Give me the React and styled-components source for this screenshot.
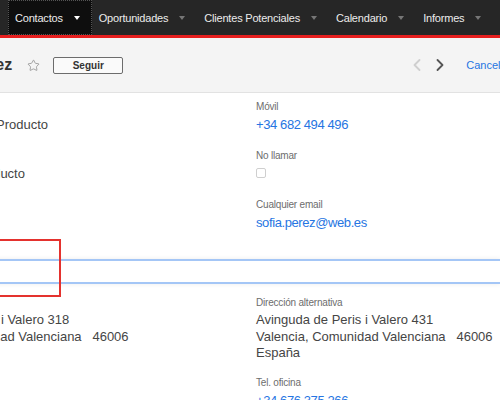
import styled, { createGlobalStyle } from "styled-components";
import { Star, ChevronLeft, ChevronRight } from "lucide-react";

const GlobalStyle = createGlobalStyle`
  html, body {
    margin: 0;
    padding: 0;
    background: #fff;
  }
  body {
    font-family: "Liberation Sans", Arial, sans-serif;
  }
`;

const Viewport = styled.div`
  position: relative;
  width: 500px;
  height: 400px;
  overflow: hidden;
  background: #fff;
`;

const Nav = styled.nav`
  display: flex;
  height: 35px;
  padding-left: 8px;
  background: #262626;
  border-bottom: 3px solid #e61e1e;
  white-space: nowrap;
`;

const Tab = styled.div`
  display: flex;
  align-items: center;
  padding: 0 12px 0 7px;
  color: #ececec;
  font-size: 11px;
  letter-spacing: -0.2px;
  background: ${(p) => (p.active ? "#0e0e0e" : "transparent")};
  outline: ${(p) => (p.active ? "1px dotted #555" : "none")};
  outline-offset: -1px;
`;

const Caret = styled.span`
  width: 0;
  height: 0;
  margin-left: 11px;
  margin-top: 1px;
  border-left: 3.5px solid transparent;
  border-right: 3.5px solid transparent;
  border-top: 4px solid ${(p) => (p.active ? "#fff" : "#767676")};
`;

const Header = styled.header`
  display: flex;
  align-items: center;
  height: 54px;
  background: #f4f4f4;
  border-bottom: 1px solid #e2e2e2;
  white-space: nowrap;

  & > * {
    flex-shrink: 0;
  }
`;

const Title = styled.h1`
  margin: 0 0 0 -74px;
  font-size: 16px;
  font-weight: bold;
  color: #333;
`;

const StarButton = styled.span`
  display: flex;
  margin-left: 15px;
  color: #8a8a8a;
`;

const FollowButton = styled.button`
  box-sizing: border-box;
  width: 70px;
  height: 17px;
  margin-left: 13px;
  padding: 0;
  border: 1px solid #6c6c6c;
  border-radius: 2px;
  background: #fafafa;
  font-family: inherit;
  font-size: 10px;
  font-weight: bold;
  color: #333;
`;

const Pager = styled.div`
  display: flex;
  gap: 3px;
  margin-left: 284px;
`;

const ArrowButton = styled.span`
  display: flex;
  color: ${(p) => (p.disabled ? "#cfcfcf" : "#555")};
`;

const CancelLink = styled.a`
  margin-left: 16px;
  color: #2675e2;
  font-size: 11px;
`;

const Body = styled.main`
  margin-left: -108px;
`;

const FieldGrid = styled.div`
  display: grid;
  grid-template-columns: 364px 1fr;
  grid-auto-rows: 49px;
  padding-top: 7px;
`;

const Field = styled.div`
  display: flex;
  flex-direction: column;
  margin-bottom: ${(p) => p.gap || 0}px;
`;

const Label = styled.span`
  font-size: 10px;
  line-height: 14px;
  letter-spacing: -0.2px;
  color: #6d6d6d;
`;

const Value = styled.span`
  margin-top: 2px;
  font-size: 13px;
  line-height: ${(p) => (p.multi ? "16.5px" : "18px")};
  color: #454545;
  white-space: pre;
`;

const LinkValue = styled.a`
  margin-top: 2px;
  font-size: 13px;
  line-height: 18px;
  letter-spacing: -0.4px;
  color: #2675e2;
  white-space: nowrap;
`;

const Checkbox = styled.span`
  box-sizing: border-box;
  width: 10px;
  height: 10px;
  margin-top: 5px;
  border: 1px solid #cfcfcf;
  border-radius: 2px;
`;

const Band = styled.div`
  box-sizing: border-box;
  height: 25px;
  margin-top: 12px;
  background: #fff;
  border-top: 2px solid #a4c6f6;
  border-bottom: 2px solid #a4c6f6;
  box-shadow: 0 0 5px rgba(0, 0, 0, 0.08);
`;

const AddressGrid = styled.div`
  display: grid;
  grid-template-columns: 364px 1fr;
  padding-top: 12px;
`;

const Column = styled.div`
  display: flex;
  flex-direction: column;
`;

const Highlight = styled.div`
  position: absolute;
  left: -10px;
  top: 239px;
  width: 71px;
  height: 58px;
  box-sizing: border-box;
  border: 2px solid #e4322e;
`;

const tabs = [
  "Contactos",
  "Oportunidades",
  "Clientes Potenciales",
  "Calendario",
  "Informes",
];

export default function App() {
  return (
    <Viewport>
      <GlobalStyle />
      <Nav>
        {tabs.map((t, i) => (
          <Tab key={t} active={i === 0}>
            {t}
            <Caret active={i === 0} />
          </Tab>
        ))}
      </Nav>
      <Header>
        <Title>Sofía Pérez</Title>
        <StarButton>
          <Star size={13} strokeWidth={1.4} />
        </StarButton>
        <FollowButton>Seguir</FollowButton>
        <Pager>
          <ArrowButton disabled>
            <ChevronLeft size={20} strokeWidth={2.2} />
          </ArrowButton>
          <ArrowButton>
            <ChevronRight size={20} strokeWidth={2.2} />
          </ArrowButton>
        </Pager>
        <CancelLink>Cancelar</CancelLink>
      </Header>
      <Body>
        <FieldGrid>
          <Field>
            <Label>Cargo</Label>
            <Value>Responsable del  Producto</Value>
          </Field>
          <Field>
            <Label>Móvil</Label>
            <LinkValue>+34 682 494 496</LinkValue>
          </Field>
          <Field>
            <Label>Departamento</Label>
            <Value>Desarrollo de Producto</Value>
          </Field>
          <Field>
            <Label>No llamar</Label>
            <Checkbox />
          </Field>
          <Field>
            <Label>Asistente</Label>
          </Field>
          <Field>
            <Label>Cualquier email</Label>
            <LinkValue>sofia.perez@web.es</LinkValue>
          </Field>
        </FieldGrid>
        <Band />
        <AddressGrid>
          <Column>
            <Field>
              <Label>Dirección</Label>
              <Value multi>
                {"Avinguda de Peris i Valero 318\nValencia, Comunidad Valenciana   46006"}
              </Value>
            </Field>
          </Column>
          <Column>
            <Field gap={14.5}>
              <Label>Dirección alternativa</Label>
              <Value multi>
                {"Avinguda de Peris i Valero 431\nValencia, Comunidad Valenciana   46006\nEspaña"}
              </Value>
            </Field>
            <Field>
              <Label>Tel. oficina</Label>
              <LinkValue>+34 676 375 266</LinkValue>
            </Field>
          </Column>
        </AddressGrid>
      </Body>
      <Highlight />
    </Viewport>
  );
}
